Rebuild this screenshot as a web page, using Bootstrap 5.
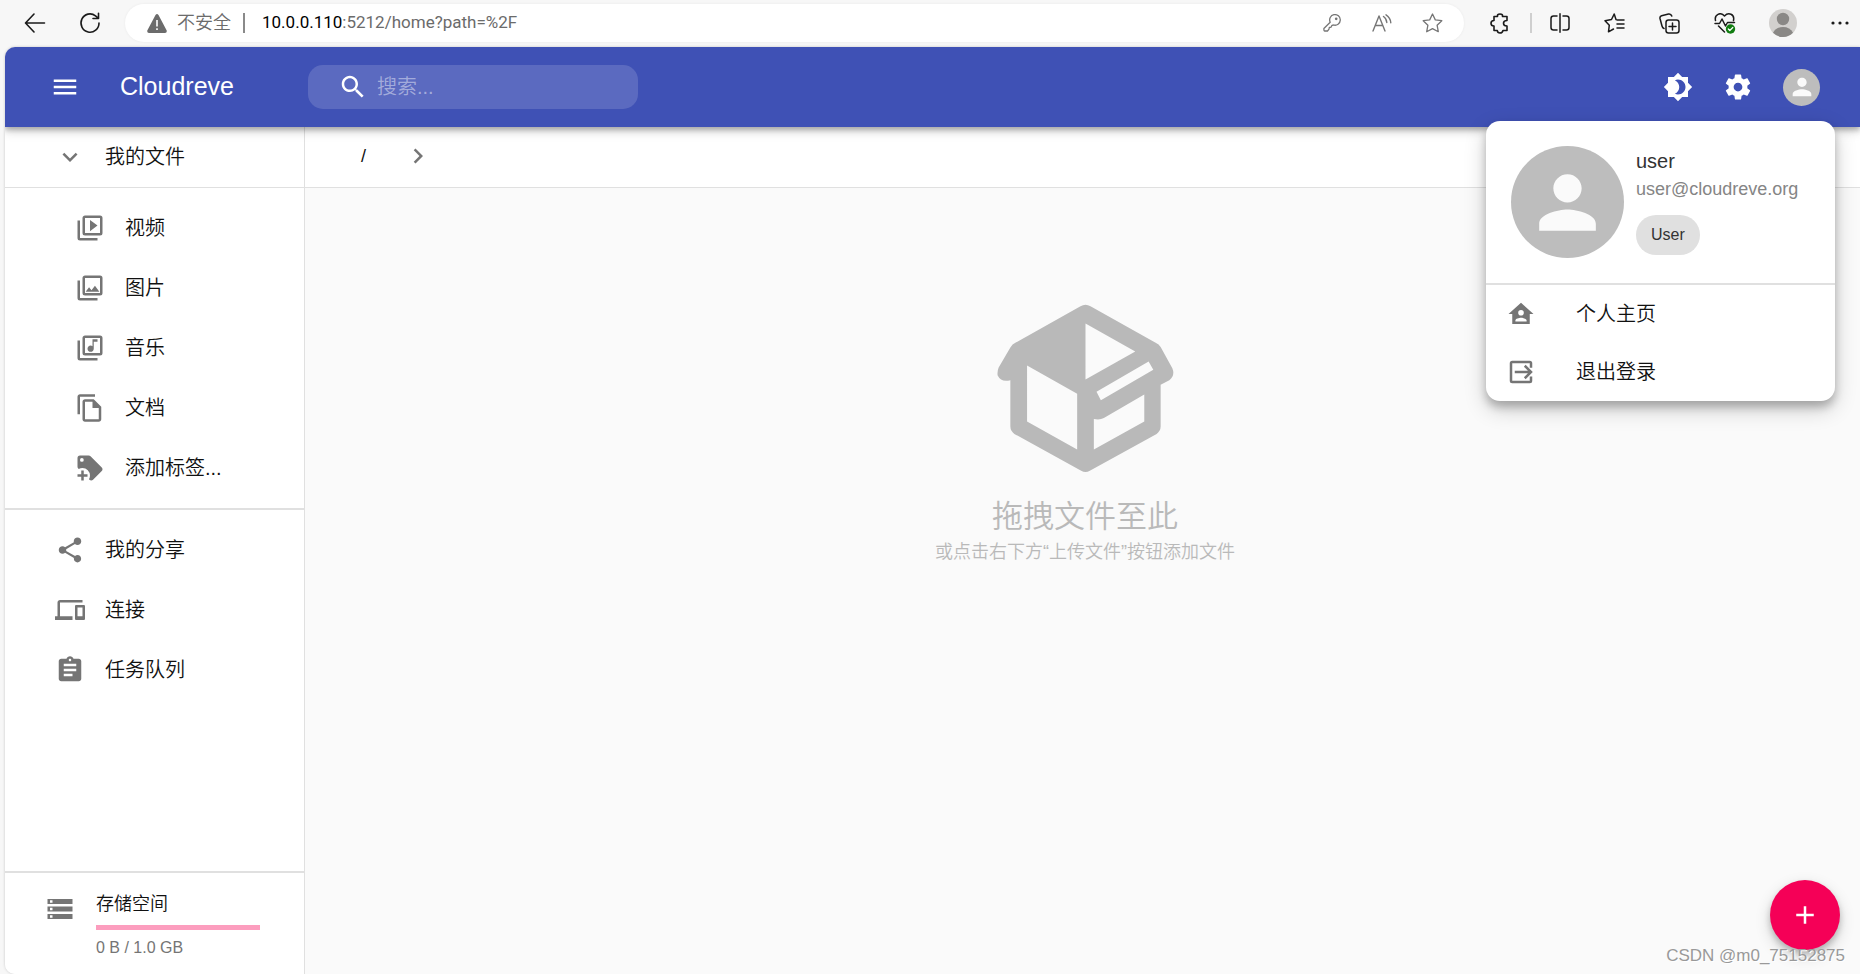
<!DOCTYPE html>
<html lang="zh-CN">
<head>
<meta charset="utf-8">
<meta name="viewport" content="width=device-width, initial-scale=1">
<title>Cloudreve</title>
<link href="https://cdn.jsdelivr.net/npm/bootstrap@5.3.0/dist/css/bootstrap.min.css" rel="stylesheet">
<style>
  body { font-family: "Liberation Sans", "Noto Sans CJK SC", sans-serif; font-size: 20px; font-weight: 350; background: #f7f7f7; color: #111; overflow: hidden; }
  svg { display: block; flex: none; fill: currentColor; }
  a { color: inherit; text-decoration: none; }
  .line-art { fill: none; stroke: currentColor; stroke-linecap: round; stroke-linejoin: round; }

  /* browser bar */
  .chrome-bar { height: 47px; padding: 4px 0 5px 7px; color: #1b1b1b; }
  .chrome-bar button { background: none; border: 0; padding: 0; color: inherit; display: flex; align-items: center; justify-content: center; }
  .tool-nav { width: 55px; }
  .tool-in { width: 50px; color: #767676 !important; }
  .tool-ext { width: 44px; margin-left: 14px; }
  .tool-user { width: 62px; }
  .tool-more { width: 46px; padding-left: 6px !important; }
  .chrome-sep { width: 2px; height: 20px; background: #cfcfcf; }
  .address { background: #fff; border-radius: 19px; height: 38px; margin-left: 8px; padding: 0 7px 0 22px; color: #6b6b6b; box-shadow: 0 0 3px rgba(0,0,0,.06); }
  .address .unsafe { font-size: 18px; margin-left: 10px; }
  .address .split { width: 2px; height: 20px; background: #8a8a8a; margin: 0 17px 0 12px; }
  .url { font-family: Roboto, sans-serif; font-size: 17px; font-weight: 400; }
  .url b { font-weight: 400; color: #000; }

  /* application frame */
  .app-frame { margin-left: 5px; border-radius: 10px 0 0 10px; overflow: hidden; background: #fafafa; position: relative; box-shadow: 0 0 3px rgba(0,0,0,.2); }
  .top-bar { height: 80px; background: #3f51b5; color: #fff; padding: 0 40px 0 45px; box-shadow: 0 3px 5px rgba(0,0,0,.25), 0 5px 10px rgba(0,0,0,.14); z-index: 3; position: relative; }
  .top-bar button { background: none; border: 0; color: inherit; padding: 0; }
  .top-actions { gap: 30px; }
  .brand { font-size: 25px; font-weight: 400; margin-left: 40px; width: 188px; }
  .search-box { width: 330px; height: 44px; border-radius: 15px; background: rgba(255,255,255,.15); padding: 0 12px 0 30px; gap: 9px; }
  .search-box input { background: transparent; border: 0; outline: 0; color: #fff; font-weight: 350; padding: 0; }
  .search-box input::placeholder { color: rgba(255,255,255,.45); opacity: 1; }
  .person-disc { background: #bdbdbd; color: #fafafa; border-radius: 50%; display: flex; align-items: center; justify-content: center; flex: none; }
  .disc-sm { width: 37px; height: 37px; }
  .disc-lg { width: 113px; height: 112px; }

  /* sidebar */
  .side { width: 300px; background: #fff; border-right: 1px solid #e0e0e0; }
  .side a { display: flex; align-items: center; height: 60px; gap: 20px; padding-left: 50px; line-height: 30px; }
  .side a.deep { padding-left: 70px; }
  .side a.thin-line { height: 61px; border-bottom: 1px solid #e0e0e0; }
  .side svg, .account svg.item-icon { color: #757575; }
  .link-set { padding: 10px 0; }
  .rule { height: 2px; background: #e0e0e0; flex: none; }
  .quota { height: 101px; padding: 15px 44px 0 40px; gap: 21px; }
  .quota svg { margin-top: 6px; }
  .quota-title { font-size: 18px; line-height: 32px; }
  .quota .progress { height: 5px; border-radius: 0; background: #fc9dbe; margin: 5px 0 8px; }
  .quota-text { font-size: 16px; line-height: 20px; color: #757575; font-weight: 400; }

  /* file area */
  .crumbs { height: 61px; background: #fff; border-bottom: 1px solid #e0e0e0; padding: 0 0 2px 56px; gap: 37px; font-size: 18px; font-weight: 400; }
  .empty { padding-top: 116px; padding-left: 5px; color: #b9b9b9; }
  .empty h1 { font-size: 31px; font-weight: 350; line-height: 40px; margin: 24px 0 0; }
  .empty p { font-size: 18px; line-height: 30px; margin: 0; }

  /* account menu */
  .account { position: absolute; top: 74px; right: 25px; width: 349px; background: #fff; border-radius: 14px; z-index: 5; overflow: hidden; box-shadow: 0 6px 8px rgba(0,0,0,.22), 0 8px 22px rgba(0,0,0,.2); }
  .account-head { padding: 25px; gap: 12px; font-weight: 400; height: 162px; }
  .account-head .who { line-height: 30px; color: #333; }
  .account-head .mail { font-size: 18px; line-height: 27px; color: #858585; }
  .chip { background: #e0e0e0; border-radius: 20px; height: 40px; line-height: 40px; font-size: 16px; padding: 0 15px; margin-top: 12px; color: #333; }
  .account a { display: flex; align-items: center; height: 58px; padding-left: 20px; gap: 40px; }

  .add-button { position: absolute; right: 20px; bottom: 24px; width: 70px; height: 70px; border: 0; border-radius: 50%; background: #f50057; color: #fff; display: flex; align-items: center; justify-content: center; box-shadow: 0 4px 6px rgba(0,0,0,.2), 0 6px 16px rgba(0,0,0,.16); }
  .watermark { position: absolute; right: 15px; bottom: 5px; font-size: 17px; line-height: 26px; font-weight: 400; color: #999; text-shadow: 1px 1px 0 #fff; }
</style>
</head>
<body class="d-flex flex-column vh-100">

<header class="chrome-bar d-flex align-items-center flex-shrink-0">
  <button class="tool-nav" aria-label="后退"><svg class="line-art" width="22" height="20" viewBox="0 0 22 20" stroke-width="1.6"><path d="M10 1L1.500 10 10 19M2 10h18.500"/></svg></button>
  <button class="tool-nav" aria-label="刷新"><svg class="line-art" width="22" height="22" viewBox="0 0 22 22" stroke-width="1.6"><path d="M20 11a9 9.200 0 1 1-3.500-7.200L19 6M19.500 1.200V6.500H14"/></svg></button>
  <div class="address d-flex align-items-center flex-grow-1">
    <svg width="20" height="19" viewBox="0 0 20 19"><path fill-rule="evenodd" d="M8.500 1Q10-.8 11.500 1L19.700 16.500Q20.200 18.700 18 19H2Q-.2 18.700.3 16.500zM9.200 6v6.500h1.600V6zm0 8.200v1.800h1.600v-1.800z"/></svg>
    <span class="unsafe">不安全</span>
    <span class="split"></span>
    <span class="url flex-grow-1"><b>10.0.0.110</b>:5212/home?path=%2F</span>
    <button class="tool-in" aria-label="密码"><svg class="line-art" width="18" height="18" viewBox="0 0 18 18" stroke-width="1.300"><path d="M7.200 8.200A5.300 5.300 0 1 1 10.500 11L9 11.300 8 13.200 6.300 13.500 6 15.200 4.500 17H1.500Q.8 17 .9 14.500z"/><circle cx="13.200" cy="4.800" r=".7"/></svg></button>
    <button class="tool-in" aria-label="朗读"><svg class="line-art" width="20" height="18" viewBox="0 0 20 18" stroke-width="1.400"><path d="M1 17L7 2l6 15M3.300 11.500h7.400M11.500 2.500q3 2 3.300 6M14 .8q4.500 2.800 4.800 8"/></svg></button>
    <button class="tool-in" aria-label="收藏"><svg class="line-art" width="21" height="20" viewBox="0 0 21 20" stroke-width="1.300"><path d="M10.500 1l2.800 5.900 6.500.8-4.700 4.500 1.200 6.500-5.800-3.100-5.800 3.100 1.200-6.500L1.200 7.700l6.500-.8z"/></svg></button>
  </div>
  <button class="tool-ext" aria-label="扩展"><svg class="line-art" width="20" height="21" viewBox="0 0 20 21" stroke-width="1.600"><path d="M4 3.500H7.500Q7 1 10 1T12.500 3.500H17V7.500Q13.500 7.500 13.500 10.200T17 13V17.500H13Q12.500 20 10 20T7.300 17.500H4V13Q1 13 1 10.300T4 7.500z"/></svg></button>
  <span class="chrome-sep ms-2"></span>
  <button class="tool-nav" aria-label="分屏"><svg class="line-art" width="20" height="20" viewBox="0 0 20 20" stroke-width="1.500"><path d="M10 .8v18.400M7 3H3.500Q1 3 1 5.500v9Q1 17 3.500 17H7M13 3h3.500Q19 3 19 5.500v9q0 2.500-2.500 2.500H13"/></svg></button>
  <button class="tool-nav" aria-label="收藏夹"><svg class="line-art" width="21" height="20" viewBox="0 0 21 20" stroke-width="1.500"><path d="M12 6.500L10.200 1 7.500 6.500 1 7.700l4.300 4.500L4.500 18.800l5-2.800M13 7h7M13 11h7M13 15h7"/></svg></button>
  <button class="tool-nav" aria-label="集锦"><svg class="line-art" width="21" height="21" viewBox="0 0 21 21" stroke-width="1.500"><rect x="7" y="7" width="13" height="13" rx="2.500"/><path d="M13.500 10v7M10 13.500h7M5 15.500Q3.500 15 3 13L1 5.500Q.6 3.500 2.600 2.800L9.500 1q2.500-.4 3.300 2"/></svg></button>
  <button class="tool-nav" aria-label="性能"><svg class="line-art" width="22" height="21" viewBox="0 0 22 21" stroke-width="1.500"><path d="M1.500 7.500Q.5 3 4 1.300T10.500 3Q13.500-.2 17 1.300t2.500 6.200M1 10.500h4.500L8 6l3.500 7 2-3.500h7M4.500 13l6 6"/><circle cx="16.500" cy="16" r="4.700" fill="#107c10" stroke="none"/><path d="M14.300 16l1.500 1.500 3-3" stroke="#fff" stroke-width="1.200"/></svg></button>
  <button class="tool-user" aria-label="个人资料"><svg width="28" height="28" viewBox="0 0 28 28"><circle cx="14" cy="14" r="14" fill="#d2d0ce"/><circle cx="14" cy="10" r="6.200" fill="#8a8886"/><path fill="#8a8886" d="M4 23.800Q7 18 14 18t10 5.800A14 14 0 0 1 4 23.800"/></svg></button>
  <button class="tool-more" aria-label="更多"><svg width="18" height="4" viewBox="0 0 18 4"><circle cx="2" cy="2" r="1.600"/><circle cx="9" cy="2" r="1.600"/><circle cx="16" cy="2" r="1.600"/></svg></button>
</header>

<div class="app-frame d-flex flex-column flex-grow-1">
  <nav class="top-bar d-flex align-items-center flex-shrink-0">
    <button aria-label="菜单"><svg width="30" height="30" viewBox="0 0 24 24"><path d="M3 18h18v-2H3v2zm0-5h18v-2H3v2zm0-7v2h18V6H3z"/></svg></button>
    <a class="brand" href="#">Cloudreve</a>
    <label class="search-box d-flex align-items-center">
      <svg width="30" height="30" viewBox="0 0 24 24"><path d="M15.500 14h-.79l-.28-.27C15.410 12.590 16 11.110 16 9.500 16 5.910 13.090 3 9.500 3S3 5.910 3 9.500 5.910 16 9.500 16c1.610 0 3.090-.59 4.230-1.570l.27.28v.79l5 4.990L20.490 19l-4.990-5zm-6 0C7.010 14 5 11.990 5 9.500S7.010 5 9.500 5 14 7.010 14 9.500 11.990 14 9.500 14z"/></svg>
      <input class="w-100" type="text" placeholder="搜索..." aria-label="搜索">
    </label>
    <div class="top-actions d-flex align-items-center ms-auto">
      <button aria-label="切换主题"><svg width="30" height="30" viewBox="0 0 24 24"><path d="M20 8.690V4h-4.690L12 .69 8.690 4H4v4.690L.69 12 4 15.310V20h4.690L12 23.310 15.310 20H20v-4.690L23.310 12 20 8.690zM12 18c-.89 0-1.740-.2-2.500-.55C11.560 16.500 13 14.420 13 12s-1.440-4.500-3.500-5.450C10.260 6.200 11.110 6 12 6c3.310 0 6 2.690 6 6s-2.690 6-6 6z"/></svg></button>
      <button aria-label="设置"><svg width="30" height="30" viewBox="0 0 24 24"><path d="M19.430 12.980c.04-.32.07-.64.07-.98s-.03-.66-.07-.98l2.110-1.650c.19-.15.24-.42.12-.64l-2-3.460c-.12-.22-.39-.3-.61-.22l-2.490 1c-.52-.4-1.080-.73-1.690-.98l-.38-2.650C14.460 2.180 14.250 2 14 2h-4c-.25 0-.46.18-.49.42l-.38 2.650c-.61.25-1.170.59-1.690.98l-2.490-1c-.23-.09-.49 0-.61.22l-2 3.460c-.13.22-.07.49.12.64l2.110 1.650c-.04.32-.07.65-.07.98s.03.66.07.98l-2.110 1.650c-.19.15-.24.42-.12.64l2 3.460c.12.22.39.3.61.22l2.490-1c.52.4 1.080.73 1.690.98l.38 2.650c.03.24.24.42.49.42h4c.25 0 .46-.18.49-.42l.38-2.650c.61-.25 1.170-.59 1.690-.98l2.490 1c.23.09.49 0 .61-.22l2-3.460c.12-.22.07-.49-.12-.64l-2.110-1.650zM12 15.500c-1.930 0-3.500-1.570-3.500-3.500s1.570-3.500 3.500-3.500 3.500 1.570 3.500 3.500-1.570 3.500-3.500 3.500z"/></svg></button>
      <button aria-label="账户"><span class="person-disc disc-sm"><svg width="28" height="28" viewBox="0 0 24 24"><path d="M12 12c2.210 0 4-1.790 4-4s-1.790-4-4-4-4 1.790-4 4 1.790 4 4 4zm0 2c-2.670 0-8 1.340-8 4v2h16v-2c0-2.660-5.330-4-8-4z"/></svg></span></button>
    </div>
  </nav>

  <div class="d-flex flex-grow-1">
    <aside class="side d-flex flex-column flex-shrink-0">
      <a class="thin-line" href="#"><svg width="30" height="30" viewBox="0 0 24 24"><path d="M16.590 8.590L12 13.170 7.410 8.590 6 10l6 6 6-6z"/></svg>我的文件</a>
      <div class="link-set">
        <a class="deep" href="#"><svg width="30" height="30" viewBox="0 0 24 24"><path d="M20 16V4H8v12h12m2 0a2 2 0 0 1-2 2H8a2 2 0 0 1-2-2V4c0-1.100.9-2 2-2h12a2 2 0 0 1 2 2zM4 6H2v14a2 2 0 0 0 2 2h14v-2H4zM12 5.500v9l6-4.500z"/></svg>视频</a>
        <a class="deep" href="#"><svg width="30" height="30" viewBox="0 0 24 24"><path d="M20 16V4H8v12h12m2 0a2 2 0 0 1-2 2H8a2 2 0 0 1-2-2V4c0-1.100.9-2 2-2h12a2 2 0 0 1 2 2zM4 6H2v14a2 2 0 0 0 2 2h14v-2H4zM15.960 10.290l-2.750 3.540-1.960-2.360L8.500 15h11z"/></svg>图片</a>
        <a class="deep" href="#"><svg width="30" height="30" viewBox="0 0 24 24"><path d="M20 16V4H8v12h12m2 0a2 2 0 0 1-2 2H8a2 2 0 0 1-2-2V4c0-1.100.9-2 2-2h12a2 2 0 0 1 2 2zM4 6H2v14a2 2 0 0 0 2 2h14v-2H4zM12.500 15c1.380 0 2.500-1.120 2.500-2.500V7h3V5h-4v5.510c-.42-.32-.93-.51-1.500-.51-1.380 0-2.500 1.120-2.500 2.500s1.120 2.500 2.500 2.500z"/></svg>音乐</a>
        <a class="deep" href="#"><svg width="30" height="30" viewBox="0 0 24 24"><path d="M16 1H4c-1.100 0-2 .9-2 2v14h2V3h12V1zm-1 4H8c-1.100 0-1.990.9-1.990 2L6 21c0 1.100.89 2 1.990 2H19c1.100 0 2-.9 2-2V11l-6-6zM8 21V7h6v5h5v9H8z"/></svg>文档</a>
        <a class="deep" href="#"><svg width="30" height="30" viewBox="0 0 24 24"><path d="M21.410 11.580L12.410 2.580C12.040 2.210 11.530 2 11 2H4A2 2 0 0 0 2 4V11C2 11.530 2.210 12.040 2.590 12.410L3 12.810C3.900 12.270 4.940 12 6 12A6 6 0 0 1 12 18C12 19.060 11.720 20.090 11.180 21L11.580 21.400C11.950 21.780 12.470 22 13 22C13.530 22 14.040 21.790 14.410 21.410L21.410 14.410C21.790 14.040 22 13.530 22 13C22 12.470 21.790 11.960 21.410 11.580M5.500 7A1.500 1.500 0 0 1 4 5.500A1.500 1.500 0 0 1 5.500 4A1.500 1.500 0 0 1 7 5.500A1.500 1.500 0 0 1 5.500 7M10 19H7V22H5V19H2V17H5V14H7V17H10V19Z"/></svg>添加标签...</a>
      </div>
      <div class="rule"></div>
      <div class="link-set">
        <a href="#"><svg width="30" height="30" viewBox="0 0 24 24"><path d="M18 16.080c-.76 0-1.440.3-1.960.77L8.910 12.700c.05-.23.09-.46.09-.7s-.04-.47-.09-.7l7.050-4.110c.54.5 1.250.81 2.040.81 1.660 0 3-1.340 3-3s-1.340-3-3-3-3 1.340-3 3c0 .24.04.47.09.7L8.040 9.810C7.500 9.310 6.790 9 6 9c-1.660 0-3 1.340-3 3s1.340 3 3 3c.79 0 1.500-.31 2.040-.81l7.120 4.160c-.05.21-.08.43-.08.65 0 1.610 1.310 2.920 2.920 2.920 1.610 0 2.920-1.310 2.920-2.920s-1.310-2.920-2.920-2.920z"/></svg>我的分享</a>
        <a href="#"><svg width="30" height="30" viewBox="0 0 24 24"><path d="M4 6h18V4H4c-1.100 0-2 .9-2 2v11H0v3h14v-3H4V6zm19 2h-6c-.55 0-1 .45-1 1v10c0 .55.45 1 1 1h6c.55 0 1-.45 1-1V9c0-.55-.45-1-1-1zm-1 9h-4v-7h4v7z"/></svg>连接</a>
        <a href="#"><svg width="30" height="30" viewBox="0 0 24 24"><path d="M19 3h-4.180C14.400 1.840 13.300 1 12 1c-1.300 0-2.400.84-2.820 2H5c-1.100 0-2 .9-2 2v14c0 1.100.9 2 2 2h14c1.100 0 2-.9 2-2V5c0-1.100-.9-2-2-2zm-7 0c.55 0 1 .45 1 1s-.45 1-1 1-1-.45-1-1 .45-1 1-1zm2 14H7v-2h7v2zm3-4H7v-2h10v2zm0-4H7V7h10v2z"/></svg>任务队列</a>
      </div>
      <div class="rule mt-auto"></div>
      <div class="quota d-flex flex-shrink-0">
        <svg width="30" height="30" viewBox="0 0 24 24"><path d="M2 20h20v-4H2v4zm2-3h2v2H4v-2zM2 4v4h20V4H2zm4 3H4V5h2v2zm-4 7h20v-4H2v4zm2-3h2v2H4v-2z"/></svg>
        <div class="flex-grow-1">
          <div class="quota-title">存储空间</div>
          <div class="progress" role="progressbar" aria-label="存储空间" aria-valuenow="0" aria-valuemin="0" aria-valuemax="100"></div>
          <div class="quota-text">0 B / 1.0 GB</div>
        </div>
      </div>
    </aside>

    <main class="flex-grow-1">
      <div class="crumbs d-flex align-items-center">
        <a href="#">/</a>
        <svg width="30" height="30" viewBox="0 0 24 24" color="#757575"><path d="M10 6L8.590 7.410 13.170 12l-4.580 4.590L10 18l6-6z"/></svg>
      </div>
      <div class="empty d-flex flex-column align-items-center text-center">
        <svg width="177" height="169" viewBox="290 70 530 506"><path fill-rule="evenodd" d="M540 77Q555 68 570 77L765 186Q775 190 780 199L815 262Q824 284 806 298L780 312V437Q780 450 768 459L568 569Q555 577 542 569L342 459Q330 450 330 437V298Q303 306 292 284Q290 272 295 260L330 200Q336 190 345 186zM555 128L704 212 555 296zM380 254L530 339V506L380 422zM588 333L744 242 758 267 601 358zM580 414Q598 418 610 411L731 341V422L580 506z"/></svg>
        <h1>拖拽文件至此</h1>
        <p>或点击右下方“上传文件”按钮添加文件</p>
      </div>
    </main>
  </div>

  <section class="account">
    <div class="account-head d-flex">
      <span class="person-disc disc-lg"><svg width="85" height="85" viewBox="0 0 24 24"><path d="M12 12c2.210 0 4-1.790 4-4s-1.790-4-4-4-4 1.790-4 4 1.790 4 4 4zm0 2c-2.670 0-8 1.340-8 4v2h16v-2c0-2.660-5.330-4-8-4z"/></svg></span>
      <div class="d-flex flex-column align-items-start">
        <div class="who">user</div>
        <div class="mail">user@cloudreve.org</div>
        <div class="chip">User</div>
      </div>
    </div>
    <div class="rule"></div>
    <a href="#"><svg class="item-icon" width="30" height="30" viewBox="0 0 24 24"><path d="M12 3L2 12H5V20H19V12H22L12 3M12 8.750A2.250 2.250 0 0 1 14.250 11A2.250 2.250 0 0 1 12 13.250A2.250 2.250 0 0 1 9.750 11A2.250 2.250 0 0 1 12 8.750M12 15C13.500 15 16.500 15.750 16.500 17.250V18H7.500V17.250C7.500 15.750 10.500 15 12 15Z"/></svg>个人主页</a>
    <a href="#"><svg class="item-icon" width="30" height="30" viewBox="0 0 24 24"><path fill="none" stroke="currentColor" stroke-width="2" d="M20 8.500V5a1 1 0 0 0-1-1H5a1 1 0 0 0-1 1v14a1 1 0 0 0 1 1h14a1 1 0 0 0 1-1v-3.500M7 12h12.500M15 7l5 5-5 5"/></svg>退出登录</a>
  </section>

  <button class="add-button" aria-label="添加"><svg width="30" height="30" viewBox="0 0 24 24"><path d="M19 13h-6v6h-2v-6H5v-2h6V5h2v6h6z"/></svg></button>
  <div class="watermark">CSDN @m0_75152875</div>
</div>

<script src="https://cdn.jsdelivr.net/npm/bootstrap@5.3.0/dist/js/bootstrap.bundle.min.js"></script>
</body>
</html>
